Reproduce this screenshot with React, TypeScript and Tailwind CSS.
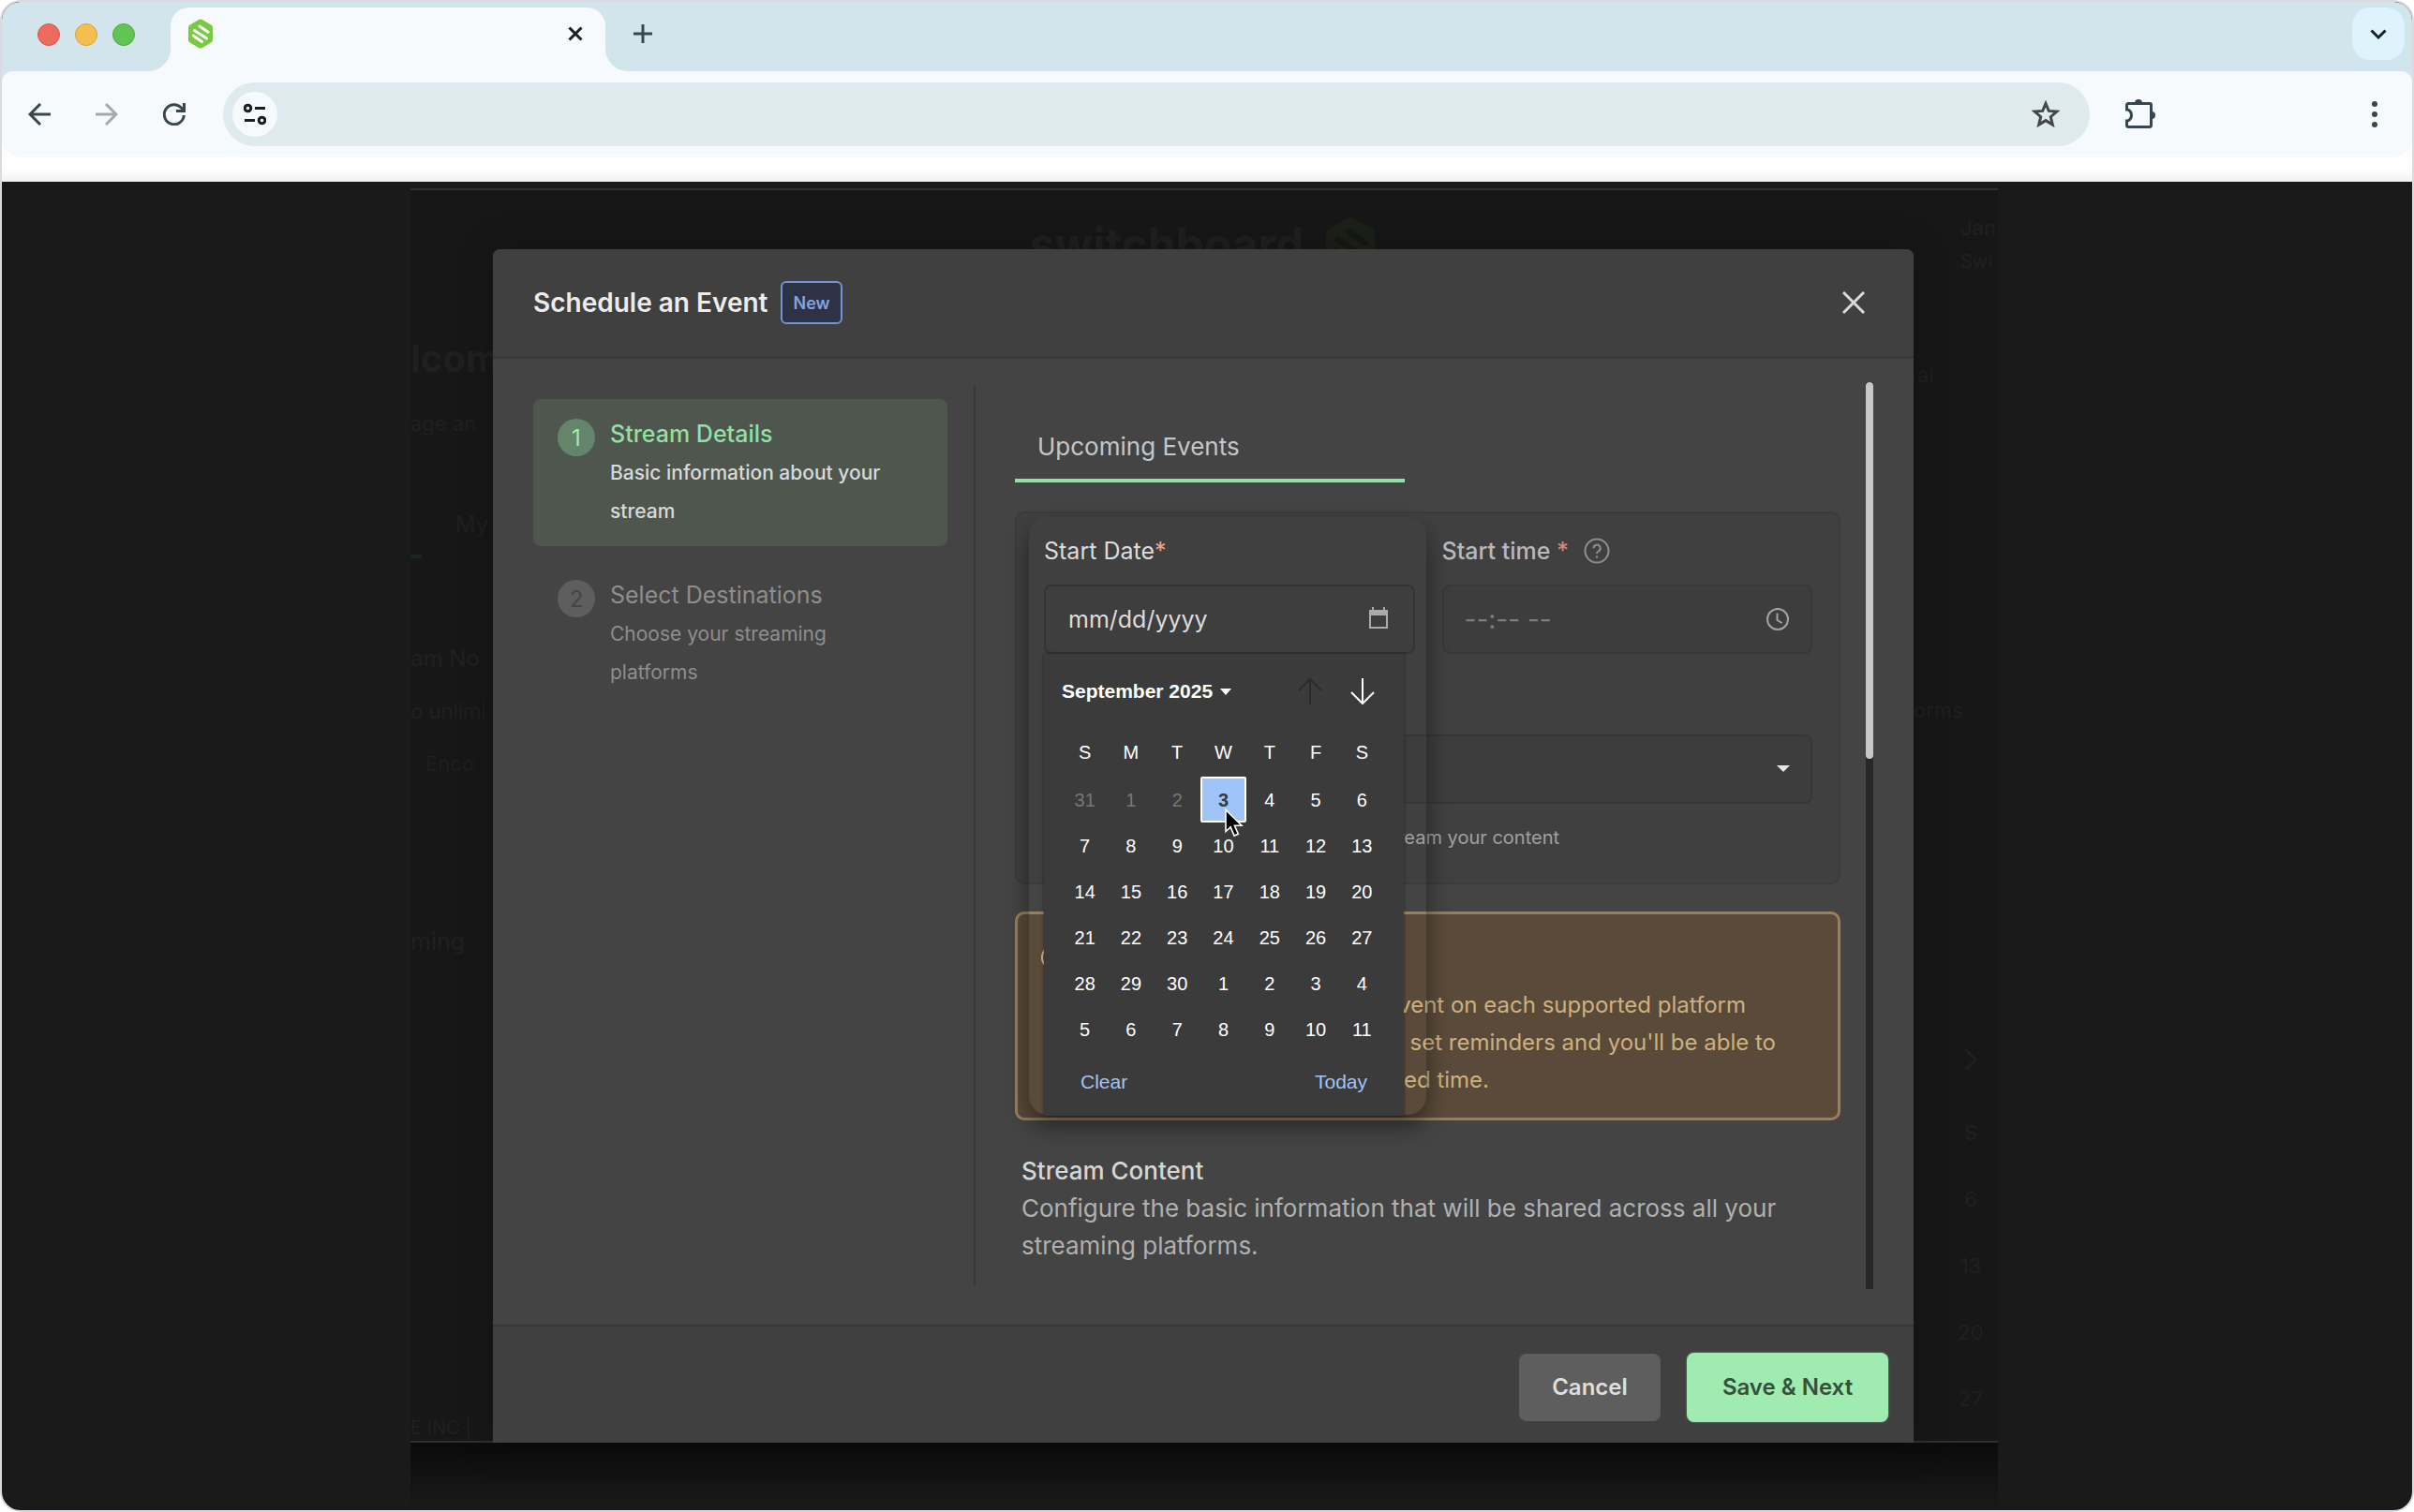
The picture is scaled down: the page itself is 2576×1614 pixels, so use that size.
import { ReactNode } from 'react';

const WEEKDAYS = ['S', 'M', 'T', 'W', 'T', 'F', 'S'];

const WEEKS = [
  [31, 1, 2, 3, 4, 5, 6],
  [7, 8, 9, 10, 11, 12, 13],
  [14, 15, 16, 17, 18, 19, 20],
  [21, 22, 23, 24, 25, 26, 27],
  [28, 29, 30, 1, 2, 3, 4],
  [5, 6, 7, 8, 9, 10, 11],
];

function Logo({ className, fill, stripe }: { className: string; fill: string; stripe: string }) {
  return (
    <svg viewBox="0 0 28 32" className={className} aria-hidden="true">
      <path
        d="M12 1.100a4 4 0 0 1 4 0l9.200 5.300A3.600 3.600 0 0 1 27 9.500v13a3.600 3.600 0 0 1-1.800 3.100L16 30.900a4 4 0 0 1-4 0l-9.200-5.300A3.600 3.600 0 0 1 1 22.500v-13a3.600 3.600 0 0 1 1.800-3.100z"
        fill={fill}
      />
      <g stroke={stripe} strokeWidth="3" strokeLinecap="round">
        <path d="M13 8l9 6.200" />
        <path d="M7.500 12.500l13 8.500" />
        <path d="M6.500 18.200l9 6.200" />
      </g>
    </svg>
  );
}

function Icon({ className, width = 2, size = 24, children }: { className: string; width?: number; size?: number; children: ReactNode }) {
  return (
    <svg viewBox={`0 0 ${size} ${size}`} className={className} fill="none" stroke="currentColor" strokeWidth={width} aria-hidden="true">
      {children}
    </svg>
  );
}

function TabStrip() {
  return (
    <div className="flex h-[74px] items-end pr-2">
      <div className="flex gap-4 self-center pr-[14px] pb-1 pl-[38px]">
        <span className="size-6 rounded-full border border-[#d8564a] bg-[#ed6a5e]" />
        <span className="size-6 rounded-full border border-[#d9a13a] bg-[#f5bf4f]" />
        <span className="size-6 rounded-full border border-[#50a73f] bg-[#61c554]" />
      </div>
      <div className="size-6 bg-[#f6fafd]">
        <div className="size-6 rounded-br-full bg-[#d3e5ec]" />
      </div>
      <div className="flex h-[68px] w-[464px] items-center justify-between rounded-t-[20px] bg-[#f6fafd] pb-3 pl-[18px] pr-6">
        <Logo className="h-8 w-7" fill="#7ac943" stripe="#ffffff" />
        <button aria-label="Close tab" className="size-4 text-[#1b1f23]">
          <Icon className="size-4" size={16} width={3}>
            <path d="M1.500 1.500l13 13M14.500 1.500l-13 13" />
          </Icon>
        </button>
      </div>
      <div className="size-6 bg-[#f6fafd]">
        <div className="size-6 rounded-bl-full bg-[#d3e5ec]" />
      </div>
      <button aria-label="New tab" className="mb-7 ml-1 size-6 text-[#36474f]">
        <Icon className="size-6" width={3}>
          <path d="M12 2v20M2 12h20" />
        </Icon>
      </button>
      <button aria-label="Search tabs" className="mb-3 ml-auto flex size-14 items-center justify-center rounded-[20px] bg-[#def4fd] text-[#1b1f23]">
        <Icon className="size-5" size={20} width={3}>
          <path d="M2.500 6.500l7.500 7.500 7.500-7.500" />
        </Icon>
      </button>
    </div>
  );
}

function Toolbar() {
  return (
    <div className="bg-linear-to-b from-[#d3e5ec] from-50% to-white to-50%">
      <div className="flex h-[92px] items-center rounded-t-[12px] rounded-b-[20px] bg-[#f6fafd] pl-7 pr-7 text-[#36474f]">
        <button aria-label="Back" className="size-6">
          <Icon className="size-6" width={3}>
            <path d="M24 12H2M13 1L2 12l11 11" />
          </Icon>
        </button>
        <button aria-label="Forward" className="ml-12 size-6 text-[#a5a9ac]">
          <Icon className="size-6" width={3}>
            <path d="M0 12h22M11 1l11 11-11 11" />
          </Icon>
        </button>
        <button aria-label="Reload" className="ml-12 size-6">
          <Icon className="size-6" width={3}>
            <path d="M22.300 13A10.500 10.500 0 1 1 19.500 5l3 3.200" />
            <path d="M22.500 0v8.500H14" />
          </Icon>
        </button>
        <div className="ml-10 flex h-[68px] flex-1 items-center rounded-full bg-[#dfeaee] pl-[10px] pr-8">
          <button aria-label="Site information" className="flex size-12 items-center justify-center rounded-full bg-[#f6fafd] text-[#1b1f23]">
            <Icon className="size-6" width={3}>
              <circle cx="4.500" cy="5.500" r="3.300" />
              <path d="M12 5.500h11M1 18.500h11" />
              <circle cx="19.500" cy="18.500" r="3.300" />
            </Icon>
          </button>
          <input aria-label="Address" type="text" className="min-w-0 flex-1 bg-transparent px-4 text-[22px] outline-none" />
          <button aria-label="Bookmark" className="size-[30px] text-[#44474a]">
            <Icon className="size-[30px]" size={30} width={3}>
              <path d="M15 3.500l3.300 7.900 8.500.700-6.500 5.600 2 8.300L15 21.600 7.700 26l2-8.300-6.500-5.600 8.500-.7z" />
            </Icon>
          </button>
        </div>
        <button aria-label="Extensions" className="ml-[38px] h-8 w-8">
          <Icon className="size-8" size={32} width={3}>
            <path d="M1.500 11V6A1.500 1.500 0 0 1 3 4.500h23A1.500 1.500 0 0 1 27.500 6v22a1.500 1.500 0 0 1-1.500 1.500H3A1.500 1.500 0 0 1 1.500 28v-5a5 6 0 0 0 0-12z" />
            <path d="M10 4a4 4 0 0 1 8 0zM28 13a4 4 0 0 1 0 8z" fill="currentColor" stroke="none" />
          </Icon>
        </button>
        <button aria-label="Menu" className="ml-[222px] flex w-6 flex-col items-center gap-[5px]">
          <span className="size-[6px] rounded-full bg-current" />
          <span className="size-[6px] rounded-full bg-current" />
          <span className="size-[6px] rounded-full bg-current" />
        </button>
      </div>
    </div>
  );
}

// Dashboard that stays barely visible behind the dialog
function DimmedPage() {
  return (
    <div className="col-start-1 row-start-1 flex justify-between overflow-hidden border-y-2 border-[#303030] bg-[#171717] text-[22px] leading-8 whitespace-nowrap text-[#202020]">
      <div className="w-[88px] pt-[156px]">
        <p className="text-[40px] leading-[48px] font-bold">lcom</p>
        <p className="mt-[29px]">age an</p>
        <p className="mt-[76px] pl-12 text-[24px]">My</p>
        <div className="mt-4 h-1 w-3 bg-[#1a2620]" />
        <p className="mt-[91px] text-[24px] font-medium">am No</p>
        <p className="mt-6">o unlimi</p>
        <p className="mt-6 pl-4 text-[#211f18]">Enco</p>
        <p className="mt-[158px] text-[25px]">ming</p>
        <p className="mt-[489px] text-[20px] leading-7">E INC |</p>
      </div>
      <div className="flex gap-[22px] pt-7 text-[48px] leading-[60px] font-bold">
        <span>switchboard</span>
        <Logo className="h-16 w-14" fill="#1b2018" stripe="#171717" />
      </div>
      <div className="w-[90px] overflow-hidden pt-6">
        <p className="pl-[50px]">Jan</p>
        <p className="mt-1 pl-[50px] text-[20px]">Swi</p>
        <p className="mt-[89px] pl-1">al</p>
        <p className="mt-[326px]">orms</p>
        <Icon className="mt-[341px] ml-[45px] size-8">
          <path d="M8 4l8 8-8 8" />
        </Icon>
        <div className="mt-[46px] flex flex-col gap-[39px] pr-2 pl-10 text-center">
          <p>S</p>
          <p>6</p>
          <p>13</p>
          <p>20</p>
          <p>27</p>
        </div>
      </div>
    </div>
  );
}

function Step({ number, title, text, active }: { number: number; title: string; text: string; active?: boolean }) {
  return (
    <li className={`flex rounded-lg py-[17px] pr-12 pl-[26px] leading-[41px] ${active ? 'bg-[#4e564e]' : ''}`}>
      <span
        className={`mt-1 flex size-10 shrink-0 items-center justify-center rounded-full text-[24px] ${
          active ? 'bg-[#65846c] text-[#9febb0]' : 'bg-[#5e5e5e] text-[#454545]'
        }`}
      >
        {number}
      </span>
      <div className="ml-4">
        <h3 className={`text-[25px] leading-[41px] ${active ? 'font-medium text-[#93dfa5]' : 'text-[#8e8e8e]'}`}>{title}</h3>
        <p className={`text-[21px] ${active ? 'font-medium text-[#d8dad8]' : 'text-[#8e8e8e]'}`}>{text}</p>
      </div>
    </li>
  );
}

function CalendarPopup() {
  return (
    <div className="absolute top-full left-0 z-20 w-[384px] bg-[#3b3b3b] pl-[19px] font-['Liberation_Sans',Arial,sans-serif] text-[20px] text-white shadow-[0_0_3px_rgba(0,0,0,0.5)]">
      <div className="flex h-[80px] items-center pr-[30px]">
        <button className="flex items-center gap-2 text-[21px] font-bold">
          September 2025
          <svg viewBox="0 0 12 7" className="h-[7px] w-3 fill-white" aria-hidden="true">
            <path d="M0 0h12L6 7z" />
          </svg>
        </button>
        <button aria-label="Previous month" className="ml-auto text-[#2b2b2b]">
          <Icon className="size-7" size={28}>
            <path d="M14 28V1M2 13L14 1l12 12" />
          </Icon>
        </button>
        <button aria-label="Next month" className="ml-7">
          <Icon className="size-7" size={28}>
            <path d="M14 0v27M2 15l12 12 12-12" />
          </Icon>
        </button>
      </div>
      <table className="w-[345px] table-fixed border-collapse text-center">
        <thead>
          <tr className="h-[51px]">
            {WEEKDAYS.map((day, i) => (
              <th key={i} className="p-0 pb-[2px] font-normal">{day}</th>
            ))}
          </tr>
        </thead>
        <tbody>
          {WEEKS.map((week, row) => (
            <tr key={row} className="h-[49px]">
              {week.map((day, col) => {
                const past = row === 0 && col < 3;
                const selected = row === 0 && col === 3;
                return (
                  <td key={col} className="p-0">
                    <button
                      className={`relative size-[49px] ${past ? 'text-[#777777]' : ''} ${
                        selected ? 'rounded-xs border-2 border-white bg-[#a1c4f8] font-bold text-[#3b3b3b]' : ''
                      }`}
                    >
                      {day}
                      {selected && (
                        <svg viewBox="0 0 20 31" className="absolute top-8 left-6 z-10 h-[31px] w-5" aria-hidden="true">
                          <path d="M1 1.500v23l5.200-4.600 3.900 9.200 4.200-1.800-3.900-9h7.600z" fill="#000" stroke="#fff" strokeWidth="1.600" />
                        </svg>
                      )}
                    </button>
                  </td>
                );
              })}
            </tr>
          ))}
        </tbody>
      </table>
      <div className="flex h-[68px] items-center justify-between pr-[39px] pb-1 pl-5 text-[21px] text-[#a1c4f8]">
        <button>Clear</button>
        <button>Today</button>
      </div>
    </div>
  );
}

function ScheduleForm() {
  return (
    <div className="mt-[31px] rounded-[10px] border-2 border-[#3b3b3b] bg-[#404040] pt-6 pr-7 pb-[34px] pl-[29px]">
      <div className="grid grid-cols-2 gap-[29px]">
        <div className="relative">
          {/* raised area around the open picker */}
          <div className="pointer-events-none absolute -top-5 -right-3 -left-4 z-10 h-[638px] rounded-[20px] shadow-[0_12px_24px_rgba(0,0,0,0.45)]" />
          <label htmlFor="start-date" className="block text-[25px] leading-8 text-[#dcdcdc]">
            Start Date<span className="text-[#e8a49a]">*</span>
          </label>
          <div className="relative mt-5">
            <input
              id="start-date"
              type="text"
              placeholder="mm/dd/yyyy"
              className="block h-[74px] w-full rounded-lg border-2 border-[#343434] bg-[#3e3e3e] px-6 text-[25px] outline-none placeholder:text-[#dcdcdc]"
            />
            <svg viewBox="0 0 22 24" className="absolute top-6 right-7 h-6 w-[22px]" aria-hidden="true">
              <path d="M2 4h18v18H2z" fill="none" stroke="#ababab" strokeWidth="2" />
              <path d="M1 3h20v6H1zM4 0h2v4H4zM16 0h2v4h-2z" fill="#ababab" />
            </svg>
            <CalendarPopup />
          </div>
        </div>
        <div>
          <div className="flex items-center gap-4">
            <label htmlFor="start-time" className="text-[25px] leading-8 font-medium text-[#b9b9b9]">
              Start time <span className="text-[#d0877c]">*</span>
            </label>
            <Icon className="size-7 text-[#8f8f8f]" size={28}>
              <circle cx="14" cy="14" r="12.500" />
              <path d="M10.500 11.300a3.600 3.600 0 1 1 5.300 3.100c-1.200.700-1.800 1.300-1.800 2.600M14 19.200v2.300" />
            </Icon>
          </div>
          <div className="relative mt-5">
            <input
              id="start-time"
              type="text"
              placeholder="--:-- --"
              className="block h-[74px] w-full rounded-lg border-2 border-[#383838] bg-[#3d3d3d] px-[22px] text-[28px] outline-none placeholder:text-[#7d7d7d]"
            />
            <Icon className="absolute top-6 right-6 size-[26px] text-[#a3a3a3]" size={26}>
              <circle cx="13" cy="13" r="11" />
              <path d="M12.500 6.500V14l5 3" />
            </Icon>
          </div>
        </div>
      </div>
      <div className="relative mt-[86px]">
        <select aria-label="Time zone" className="block h-[74px] w-full appearance-none rounded-lg border-2 border-[#363636] bg-[#3d3d3d] px-6 text-[25px] text-[#b9b9b9] outline-none" />
        <svg viewBox="0 0 14 7" className="absolute top-[33px] right-6 h-[7px] w-[14px] fill-[#e6e6e6]" aria-hidden="true">
          <path d="M0 0h14L7 7z" />
        </svg>
      </div>
      <p className="mt-[22px] w-[550px] text-right text-[20px] leading-7 text-[#a0a0a0]">stream your content</p>
    </div>
  );
}

function PlatformNotice() {
  return (
    <div className="mt-[29px] rounded-[10px] border-3 border-[#97805a] bg-[#5a4a39] px-[22px] pt-[30px] pb-5 text-[24px] text-[#ccb180]">
      <Icon className="block size-8" size={32}>
        <circle cx="16" cy="16" r="12" />
        <path d="M16 14.500v7M16 10v2" />
      </Icon>
      <div className="mt-[15px] leading-10">
        <p className="w-[755px] text-right">event on each supported platform</p>
        <p className="w-[787px] text-right">set reminders and you'll be able to</p>
        <p className="w-[481px] text-right">scheduled time.</p>
      </div>
    </div>
  );
}

function EventDialog() {
  return (
    <div
      role="dialog"
      aria-labelledby="dialog-title"
      className="z-10 col-start-1 row-start-1 mt-[65px] mr-[90px] ml-[88px] flex flex-col rounded-t-lg bg-[#444444] shadow-[0_0_40px_rgba(0,0,0,0.25)]"
    >
      <header className="flex h-[117px] items-center rounded-t-lg border-b-3 border-[#383838] bg-[#404040] pr-[52px] pl-[43px]">
        <h2 id="dialog-title" className="text-[28px] font-semibold text-[#ececec]">Schedule an Event</h2>
        <span className="ml-[14px] flex h-[46px] items-center rounded-md border-2 border-[#7295d0] bg-[#2e3247] px-[11px] text-[18px] font-semibold text-[#82a3de]">
          New
        </span>
        <button aria-label="Close" className="ml-auto text-[#dadada]">
          <Icon className="size-6" width={3}>
            <path d="M1 1l22 22M23 1L1 23" />
          </Icon>
        </button>
      </header>

      <div className="flex flex-1 px-[43px] pt-[25px] pb-[38px]">
        <ol className="mt-[18px] flex w-[442px] flex-col gap-[15px]">
          <Step number={1} title="Stream Details" text="Basic information about your stream" active />
          <Step number={2} title="Select Destinations" text="Choose your streaming platforms" />
        </ol>
        <div className="my-1 ml-7 w-[2px] bg-[#373737]" />
        <div className="ml-[42px] flex-1">
          <div className="flex h-[107px] w-[416px] flex-col justify-end border-b-4 border-[#93dfa5] pb-4 pl-6">
            <button className="text-left text-[26px] leading-9 text-[#c6c6c6]">Upcoming Events</button>
          </div>
          <ScheduleForm />
          <PlatformNotice />
          <section className="mt-[34px] pr-8 pl-[7px] text-[26px] leading-10">
            <h3 className="font-medium text-[#d6d6d6]">Stream Content</h3>
            <p className="text-[#b0b0b0]">
              Configure the basic information that will be shared across all your streaming platforms.
            </p>
          </section>
        </div>
        <div className="ml-[27px] w-2 bg-[#282828]">
          <div className="h-[402px] rounded-full bg-[#c8c8c8]" />
        </div>
      </div>

      <footer className="flex h-[126px] items-center justify-end gap-7 border-t-2 border-[#373737] bg-[#404040] pt-[6px] pr-[27px] text-[24px] font-semibold">
        <button className="h-[72px] w-[151px] rounded-lg bg-[#5e5e5e] text-[#dedede]">Cancel</button>
        <button className="h-[74px] w-[215px] rounded-lg bg-[#9febb0] text-[#33513b] shadow-[0_0_2px_#6db57f]">Save &amp; Next</button>
      </footer>
    </div>
  );
}

export default function App() {
  return (
    <div className="flex min-h-screen flex-col overflow-hidden rounded-[22px] border-2 border-[#dadae0] bg-[#1a1a1a] font-['Inter',sans-serif]">
      <div className="bg-[#d3e5ec]">
        <TabStrip />
      </div>
      <Toolbar />
      <div className="h-[26px] bg-linear-to-b from-white from-50% to-[#f0f0f0]" />
      <main className="flex flex-1 flex-col pt-[7px] pr-[442px] pl-[436px]">
        <div className="grid">
          <DimmedPage />
          <EventDialog />
        </div>
        <div className="flex-1 bg-linear-to-b from-[#0b0b0b] to-[#1a1a1a]" />
      </main>
    </div>
  );
}
